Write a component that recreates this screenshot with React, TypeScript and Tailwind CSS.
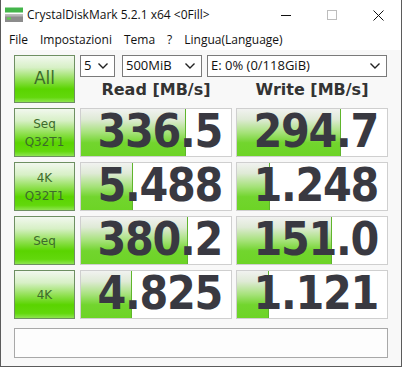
import React from 'react';

const rows = [
  { label: ['Seq', 'Q32T1'], read: '336.5', write: '294.7' },
  { label: ['4K', 'Q32T1'], read: '5.488', write: '1.248' },
  { label: ['Seq'], read: '380.2', write: '151.0' },
  { label: ['4K'], read: '4.825', write: '1.121' },
];

// CrystalDiskMark draws the bar on a log scale
function barWidth(v: string) {
  const n = parseFloat(v);
  return Math.round(30.5 + 29.6 * Math.log10(n));
}

function Chevron() {
  return (
    <svg width="10" height="6" viewBox="0 0 10 6" className="shrink-0">
      <polyline points="0.5,0.5 5,5 9.5,0.5" fill="none" stroke="#222" strokeWidth="1.4" />
    </svg>
  );
}

function Select({ text, w }: { text: string; w: string }) {
  return (
    <div className={`${w} h-[22px] border border-[#7a7a7a] bg-white flex items-center justify-between pl-[3px] pr-[6px] text-[13px] text-[#111] font-['Open_Sans',sans-serif]`}>
      <span>{text}</span>
      <Chevron />
    </div>
  );
}

function GreenButton({ children, big }: { children: React.ReactNode; big?: boolean }) {
  return (
    <div
      className={`w-[61px] ${big ? 'h-[48px] text-[17px]' : 'h-[49px] text-[12px] leading-[18px]'} border border-[#6e8f62] flex flex-col items-center justify-center text-[#3d6b2c] font-['DejaVu_Sans',sans-serif] bg-[linear-gradient(to_bottom,#f2f8ef_0%,#d7f0c6_25%,#8fe050_52%,#5ad400_72%,#62d80c_90%,#8ee450_100%)]`}
    >
      {children}
    </div>
  );
}

function Value({ v }: { v: string }) {
  return (
    <div className="relative w-[152px] h-[49px] border border-[#cfcfcf] bg-white">
      <div
        className="absolute left-0 top-0 bottom-0 border-r border-[#5fb52c] bg-[linear-gradient(to_bottom,#f1f2f0_0%,#dfead6_22%,#a6e27a_50%,#72d52e_72%,#6dd426_100%)]"
        style={{ width: barWidth(v) }}
      />
      <div className="relative h-full flex items-center justify-end pr-[9px] pb-[3px] text-[46px] leading-[38px] font-bold tracking-[-1.3px] text-[#393941] font-['DejaVu_Sans_Condensed','DejaVu_Sans',sans-serif]">
        {v}
      </div>
    </div>
  );
}

export default function App() {
  return (
    <div className="w-[402px] h-[367px] bg-white border-l border-r border-b border-[#5b5b5b] flex flex-col overflow-hidden">
      {/* title bar */}
      <div className="h-[30px] flex items-center shrink-0">
        <svg width="19" height="16" viewBox="0 0 19 16" className="ml-[4px] mr-[3px]">
          <rect x="0" y="0.5" width="18" height="5" fill="#43b54a" />
          <rect x="0" y="7.5" width="18" height="7.5" fill="#8c8c8c" />
          <rect x="0" y="7.5" width="18" height="2" fill="#b5b5b5" />
          <rect x="2" y="10.5" width="4" height="2" fill="#58d24a" />
        </svg>
        <span className="text-[12px] text-[#111] font-['Open_Sans',sans-serif]">CrystalDiskMark 5.2.1 x64 &lt;0Fill&gt;</span>
        <div className="ml-auto flex items-center h-full">
          <div className="w-[46px] h-full flex items-center justify-center">
            <div className="w-[10px] h-[1px] bg-[#111]" />
          </div>
          <div className="w-[46px] h-full flex items-center justify-center">
            <div className="w-[10px] h-[10px] border border-[#bdbdbd]" />
          </div>
          <div className="w-[46px] h-full flex items-center justify-center">
            <svg width="11" height="11" viewBox="0 0 11 11">
              <path d="M0.5 0.5 L10.5 10.5 M10.5 0.5 L0.5 10.5" stroke="#111" strokeWidth="1" />
            </svg>
          </div>
        </div>
      </div>

      {/* menu */}
      <div className="h-[20px] flex items-center gap-[12px] pl-[8px] text-[12px] text-[#111] font-['Open_Sans',sans-serif] shrink-0">
        <span>File</span>
        <span>Impostazioni</span>
        <span>Tema</span>
        <span>?</span>
        <span>Lingua(Language)</span>
      </div>

      {/* client */}
      <div className="flex-1 bg-[#f8f8f8] pl-[13px] pt-[5px] flex flex-col">
        <div className="flex">
          <div className="mr-[5px]">
            <GreenButton big>All</GreenButton>
          </div>
          <div className="flex flex-col">
            <div className="flex">
              <Select text="5" w="w-[35px]" />
              <div className="w-[7px]" />
              <Select text="500MiB" w="w-[80px]" />
              <div className="w-[5px]" />
              <Select text="E: 0% (0/118GiB)" w="w-[180px]" />
            </div>
            <div className="flex h-[26px] items-center text-[16px] font-bold text-[#333] font-['DejaVu_Sans',sans-serif]">
              <div className="w-[152px] text-center">Read [MB/s]</div>
              <div className="w-[4px]" />
              <div className="w-[152px] text-center">Write [MB/s]</div>
            </div>
          </div>
        </div>

        <div className="flex flex-col gap-[5px] mt-[5px]">
          {rows.map((r, i) => (
            <div key={i} className="flex">
              <div className="mr-[5px]">
                <GreenButton>
                  {r.label.map((l) => (
                    <span key={l}>{l}</span>
                  ))}
                </GreenButton>
              </div>
              <Value v={r.read} />
              <div className="w-[4px]" />
              <Value v={r.write} />
            </div>
          ))}
        </div>

        <div className="mt-[9px] w-[374px] h-[30px] border border-[#a8a8a8] bg-[#fdfdfd]" />
      </div>
    </div>
  );
}
